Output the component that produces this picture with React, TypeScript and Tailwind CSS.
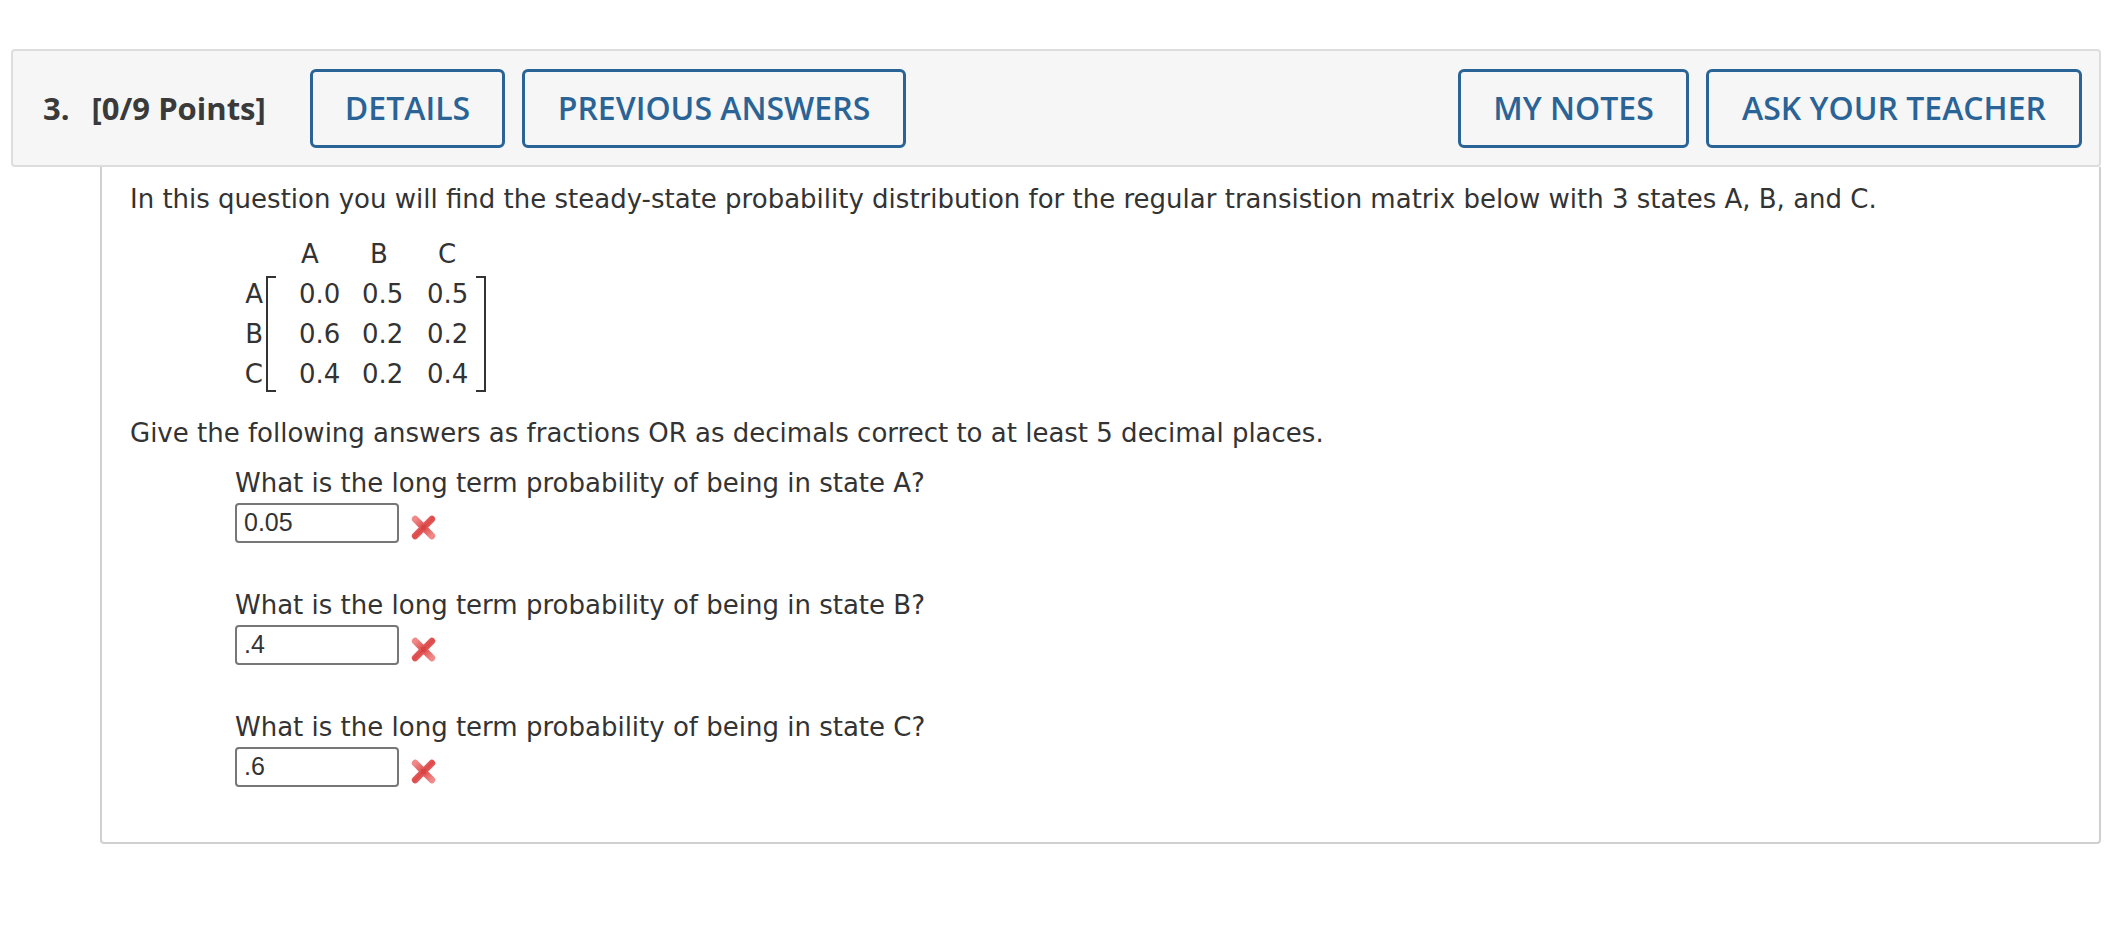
import React from "react";

function RedX() {
  return (
    <svg width="27" height="27" viewBox="0 0 26 26" className="ml-[11px] mt-[9px] shrink-0">
      <defs>
        <linearGradient id="xg" x1="0" y1="0" x2="1" y2="1">
          <stop offset="0" stopColor="#f08a8a" />
          <stop offset="0.5" stopColor="#de4a4a" />
          <stop offset="1" stopColor="#f08a8a" />
        </linearGradient>
      </defs>
      <line x1="5" y1="5" x2="21" y2="21" stroke="url(#xg)" strokeWidth="6.5" strokeLinecap="round" />
      <line x1="21" y1="5" x2="5" y2="21" stroke="url(#xg)" strokeWidth="6.5" strokeLinecap="round" />
      <rect x="10.5" y="10.5" width="5" height="5" fill="#d43c3c" opacity="0.6" />
    </svg>
  );
}

function Answer({ q, v, first }: { q: string; v: string; first?: boolean }) {
  return (
    <div className={first ? "ml-[105px] mt-[20px]" : "ml-[105px] mt-[47px]"}>
      <div className="leading-[30px]">{q}</div>
      <div className="flex items-center mt-[5px]">
        <div className="w-[164px] h-[40px] border-2 border-[#777777] rounded-[4px] bg-white flex items-center pl-[7px] font-['Liberation_Sans',Arial,sans-serif] text-[25px] text-[#333]">
          {v}
        </div>
        <RedX />
      </div>
    </div>
  );
}

const rows = [
  ["A", "0.0", "0.5", "0.5"],
  ["B", "0.6", "0.2", "0.2"],
  ["C", "0.4", "0.2", "0.4"],
];

function Matrix() {
  return (
    <div className="flex ml-[114px] mt-[20px]">
      <div className="flex flex-col pt-[40px] w-[22px] pr-[3px] text-right">
        {rows.map((r) => (
          <div key={r[0]} className="h-[40px] leading-[40px]">
            {r[0]}
          </div>
        ))}
      </div>
      <div className="flex flex-col">
        <div className="flex h-[40px] leading-[40px] pl-[35px]">
          <div className="w-[18px] mr-[51px] text-center">A</div>
          <div className="w-[18px] mr-[50px] text-center">B</div>
          <div className="w-[18px] text-center">C</div>
        </div>
        <div className="flex">
          <div className="w-[10px] border-l-2 border-t-2 border-b-2 border-[#333] my-[2px]" />
          <div className="flex flex-col pl-[23px] pr-[8px]">
            {rows.map((r) => (
              <div key={r[0]} className="flex h-[40px] leading-[40px]">
                <div className="w-[41px] mr-[22px]">{r[1]}</div>
                <div className="w-[41px] mr-[24px]">{r[2]}</div>
                <div className="w-[41px]">{r[3]}</div>
              </div>
            ))}
          </div>
          <div className="w-[10px] border-r-2 border-t-2 border-b-2 border-[#333] my-[2px]" />
        </div>
      </div>
    </div>
  );
}

export default function App() {
  return (
    <div className="w-[2110px] h-[926px] bg-white pt-[49px] pl-[11px] pr-[9px]">
      <div className="h-[118px] border-2 border-[#dddddd] rounded-[4px] bg-[#f6f6f6] flex items-center pl-[30px] pr-[17px] font-['Open_Sans',sans-serif]">
        <div className="w-[267px] flex items-center text-[31px] font-bold text-[#3a3a3a]">
          <span>3.</span>
          <span className="ml-[22px]">[0/9 Points]</span>
        </div>
        <div className="w-[195px] h-[79px] border-[3px] border-[#2a6496] rounded-[6px] flex items-center justify-center text-[32px] font-semibold text-[#2a6496]">
          DETAILS
        </div>
        <div className="ml-[17px] w-[384px] h-[79px] border-[3px] border-[#2a6496] rounded-[6px] flex items-center justify-center text-[32px] font-semibold text-[#2a6496]">
          PREVIOUS ANSWERS
        </div>
        <div className="ml-auto w-[231px] h-[79px] border-[3px] border-[#2a6496] rounded-[6px] flex items-center justify-center text-[32px] font-semibold text-[#2a6496]">
          MY NOTES
        </div>
        <div className="ml-[17px] w-[376px] h-[79px] border-[3px] border-[#2a6496] rounded-[6px] flex items-center justify-center text-[32px] font-semibold text-[#2a6496]">
          ASK YOUR TEACHER
        </div>
      </div>
      <div className="ml-[89px] h-[677px] border-2 border-t-0 border-[#d0d0d0] rounded-b-[4px] pl-[28px] pt-[17px] font-['DejaVu_Sans',Verdana,sans-serif] text-[26px] text-[#333]">
        <div className="leading-[30px]">
          In this question you will find the steady-state probability distribution for the regular transistion matrix below with 3 states A, B, and C.
        </div>
        <Matrix />
        <div className="leading-[30px] mt-[24px]">
          Give the following answers as fractions OR as decimals correct to at least 5 decimal places.
        </div>
        <Answer first q="What is the long term probability of being in state A?" v="0.05" />
        <Answer q="What is the long term probability of being in state B?" v=".4" />
        <Answer q="What is the long term probability of being in state C?" v=".6" />
      </div>
    </div>
  );
}
